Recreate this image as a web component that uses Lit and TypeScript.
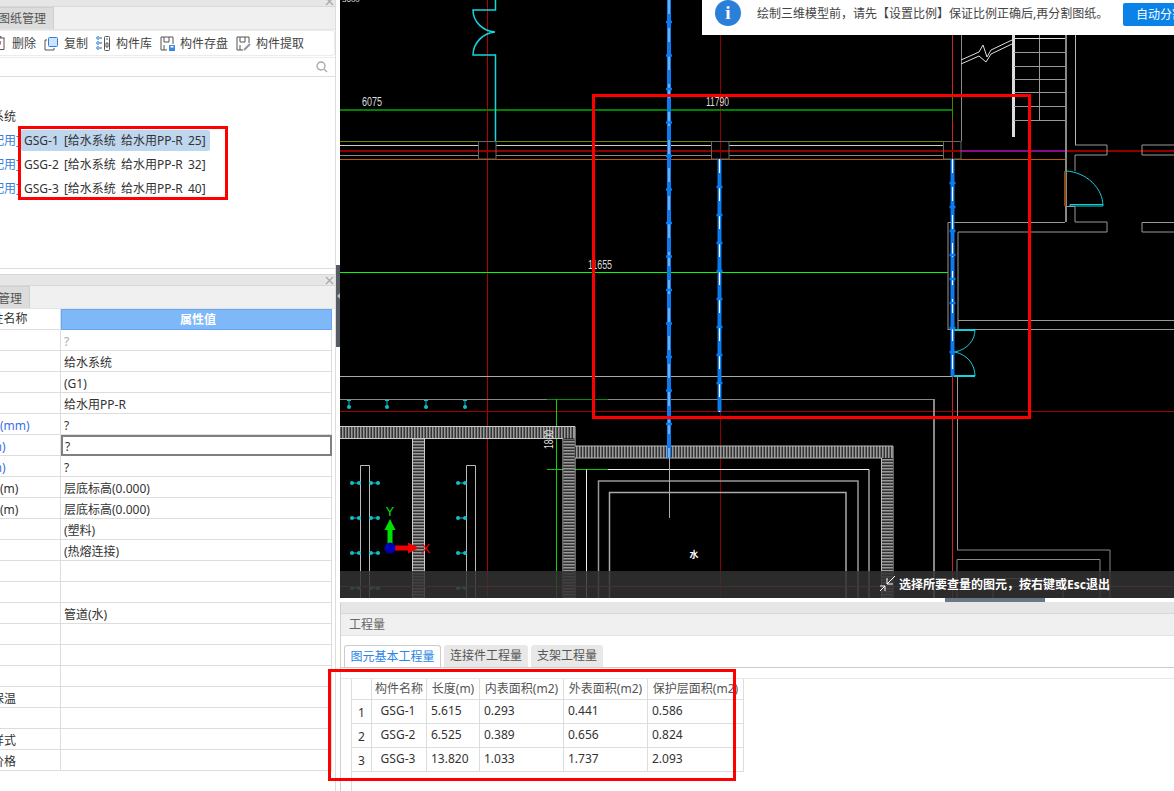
import { LitElement, html, css, svg } from "lit";
import { customElement } from "lit/decorators.js";

const props: { k: string; v: string; blue?: boolean; sub?: boolean; muted?: boolean; focus?: boolean }[] = [
  { k: "名称", v: "?", muted: true },
  { k: "系统类型", v: "给水系统" },
  { k: "系统编号", v: "(G1)" },
  { k: "材质名称", v: "给水用PP-R" },
  { k: "公称直径(mm)", v: "?", blue: true },
  { k: "外径(mm)", v: "?", blue: true, focus: true },
  { k: "内径(mm)", v: "?", blue: true },
  { k: "起点标高(m)", v: "层底标高(0.000)" },
  { k: "终点标高(m)", v: "层底标高(0.000)" },
  { k: "管件材质", v: "(塑料)" },
  { k: "连接方式", v: "(热熔连接)" },
  { k: "所在位置", v: "" },
  { k: "安装部位", v: "" },
  { k: "汇总信息", v: "管道(水)" },
  { k: "备注信息", v: "" },
  { k: "计算设置", v: "" },
  { k: "显示样式", v: "" },
  { k: "刷油保温", v: "", sub: true },
  { k: "保温材质", v: "" },
  { k: "保护样式", v: "", sub: true },
  { k: "管件价格", v: "", sub: true },
];

const tree = [
  "GSG-1 [给水系统 给水用PP-R 25]",
  "GSG-2 [给水系统 给水用PP-R 32]",
  "GSG-3 [给水系统 给水用PP-R 40]",
];

const qty = [
  ["1", "GSG-1", "5.615", "0.293", "0.441", "0.586"],
  ["2", "GSG-2", "6.525", "0.389", "0.656", "0.824"],
  ["3", "GSG-3", "13.820", "1.033", "1.737", "2.093"],
];

const range = (from: number, to: number, step: number) => {
  const out: number[] = [];
  for (let v = from; v <= to; v += step) out.push(v);
  return out;
};

const L = (x1: number, y1: number, x2: number, y2: number, c: string, w = 1) =>
  svg`<line x1=${x1} y1=${y1} x2=${x2} y2=${y2} stroke=${c} stroke-width=${w} shape-rendering="crispEdges"></line>`;
const P = (d: string, c: string, w = 1) => svg`<path d=${d} stroke=${c} stroke-width=${w} fill="none"></path>`;

const pipe = (x: number, y1: number, y2: number, ticks: number[], light = false) => svg`
  <line x1=${x} y1=${y1} x2=${x} y2=${y2} stroke="#0a7bf0" stroke-width="4"></line>
  <line x1=${x} y1=${y1} x2=${x} y2=${y2} stroke=${light ? "#a8d4ff" : "#ffffff"} stroke-width="1.2" stroke-dasharray="14 14"></line>
  ${ticks.map((t) => svg`<line x1=${x - 3} y1=${t} x2=${x + 3} y2=${t} stroke="#0a7bf0" stroke-width="2.5"></line>`)}
`;

const dotH = (x1: number, x2: number, y: number) => svg`
  <line x1=${x1} y1=${y} x2=${x2} y2=${y} stroke="#10c0c8"></line>
  <circle cx=${x1 + 1} cy=${y} r="2" fill="#10c0c8"></circle>
  <circle cx=${x2 - 1} cy=${y} r="2" fill="#10c0c8"></circle>`;

const drawing = () => svg`
  <defs>
    <pattern id="hatchV" width="3" height="4" patternUnits="userSpaceOnUse">
      <rect width="3" height="4" fill="#333"></rect><rect width="1.500" height="4" fill="#999"></rect>
    </pattern>
    <pattern id="hatchH" width="4" height="3" patternUnits="userSpaceOnUse">
      <rect width="4" height="3" fill="#333"></rect><rect width="4" height="1.500" fill="#999"></rect>
    </pattern>
  </defs>
  <rect x="340" y="0" width="834" height="598" fill="#000"></rect>

  <text class="dim tiny" x="342" y="2">3600</text>
  ${L(487.5, 0, 487.5, 598, "#b00000")}
  ${L(720.5, 35, 720.5, 598, "#8c0000", 1.5)}
  ${L(952.5, 35, 952.5, 598, "#d02020")}
  ${L(340, 150.5, 1174, 150.5, "#900000", 2)}
  ${L(340, 411.5, 1174, 411.5, "#a00000")}
  ${L(961, 150.5, 1065, 150.5, "#8a0a8a", 2)}

  ${L(340, 110, 952, 110, "#008000", 2)}
  ${L(340, 272.5, 948, 272.5, "#00ff00")}
  ${L(495, 92, 495, 120, "#20c020")}
  ${L(952, 92, 952, 120, "#508000")}

  ${L(340, 141, 952, 141, "#6a8a00")}
  ${L(340, 145.5, 478, 145.5, "#cccccc")}
  ${L(496, 145.5, 711, 145.5, "#cccccc")}
  ${L(729, 145.5, 944, 145.5, "#cccccc")}
  ${L(340, 155, 478, 155, "#888888")}
  ${L(496, 155, 711, 155, "#888888")}
  ${L(729, 155, 944, 155, "#888888")}
  ${L(340, 159, 1065, 159, "#c05a00")}
  <rect x="478.5" y="141.5" width="17.5" height="17.5" fill="none" stroke="#666"></rect>
  <rect x="711.5" y="141.5" width="17.5" height="17.5" fill="none" stroke="#666"></rect>
  <rect x="943.5" y="141.5" width="17.5" height="17.5" fill="none" stroke="#666"></rect>

  ${P("M495.5 0V10H473C473 22 483 31 495 32C483 33 473 43 473 55H495.5V141", "#10d8e0", 1.5)}

  ${L(961, 35, 961, 141, "#888")}
  ${L(1013, 35, 1013, 137, "#dddddd", 3)}
  ${L(1039, 35, 1039, 120, "#999", 1)}
  ${[38, 52, 66, 79, 92, 106, 120].map((y) => L(1014, y, 1065, y, y === 38 ? "#ddd" : "#999", 1))}
  ${L(1065.5, 35, 1065.5, 222, "#888", 2)}
  ${L(1075, 35, 1075, 145, "#bbb")}
  ${P("M1075 145H1107V155H1075V171", "#999")}
  ${P("M1174 145H1142V155H1174", "#999")}
  ${P("M961 60L979 52L983 45L987 57L991 50L1012 40M961 64L979 56L986 62L991 54L1012 44", "#ddd")}
  ${L(1065, 171, 1065, 206, "#8a4a10", 1.5)}
  ${P("M1066 171C1086 172 1103 188 1103 206H1070V204.5H1103", "#10d0d8")}
  ${P("M1066 206.5H1075V222H1107V232H958V330M948 330V222.5H1065", "#999")}
  ${P("M1174 222.5H1142V232H1174", "#999")}
  ${L(948, 329.7, 1174, 329.7, "#999")}
  ${L(958, 320.3, 1174, 320.3, "#999")}

  ${P("M952 329.5H975C975 340 968 349 955 352C968 355 975 365 975 376H952", "#10d0d8")}
  ${L(954, 329.5, 975, 329.5, "#10d0d8", 2)}
  ${L(954, 376.2, 975, 376.2, "#10d8e0", 2)}
  ${L(957, 376, 957, 550, "#999")}
  ${P("M957 550H1110V598M957 559.5H1100V598M957 559.5V598M993 598V578.5H1063V598", "#888")}
  ${L(340, 376.5, 952, 376.5, "#aaa")}
  ${L(340, 399.5, 934, 399.5, "#888")}
  ${L(934, 399, 934, 598, "#888", 1.5)}
  ${L(547, 399.5, 608, 399.5, "#0a8a0a")}
  ${L(547, 469.5, 608, 469.5, "#10c010")}
  ${L(556.5, 399, 556.5, 598, "#10d010")}

  <rect x="340" y="426.5" width="235" height="12" fill="url(#hatchV)"></rect>
  ${P("M340 426.5H575V598M340 438.5H563V598", "#ccc")}
  <rect x="563.5" y="439" width="11" height="159" fill="url(#hatchH)"></rect>
  <rect x="412.5" y="439" width="12" height="159" fill="url(#hatchH)"></rect>
  ${P("M412.5 439V598M424.5 439V598", "#ccc")}
  <rect x="575" y="446" width="318" height="12" fill="url(#hatchV)"></rect>
  ${P("M575 446H893V598M575 458H881.5V598", "#bbb")}
  <rect x="882" y="458.5" width="11" height="140" fill="url(#hatchH)"></rect>

  ${P("M608 469.5H869V598M586.5 469.5V598", "#eee")}
  ${P("M598.5 598V481H858V598", "#999", 1.5)}
  ${P("M609.5 598V492.5H846V598", "#aaa", 1.5)}
  ${P("M360.5 598V465.5H369.5V598", "#bbb")}
  ${P("M466.5 598V465.5H475.5V598", "#bbb")}
  ${[483, 518, 553, 588].map((y) => svg`${dotH(351, 360, y)}${dotH(370, 379, y)}${dotH(457, 466, y)}`)}
  ${[349, 387, 426, 465].map(
    (x) => svg`<line x1=${x} y1=${400} x2=${x} y2=${407} stroke="#10c0c8"></line>
      <line x1=${x - 2} y1="400.5" x2=${x + 2} y2="400.5" stroke="#10c0c8"></line>
      <circle cx=${x} cy="407" r="2" fill="#10c0c8"></circle>`
  )}

  ${pipe(669, 0, 458, range(22, 430, 33.5), true)}
  ${L(669, 458, 669, 518, "#aaa")}
  ${pipe(719.5, 159, 412, range(187, 390, 28))}
  ${pipe(952.5, 159, 376, [183, 207, 231, 255, 279, 303, 328, 352])}

  <text class="dim" x="362" y="106" textLength="20" lengthAdjust="spacingAndGlyphs">6075</text>
  <text class="dim" x="706" y="106" textLength="23" lengthAdjust="spacingAndGlyphs">11790</text>
  <text class="dim" x="588" y="269" textLength="24" lengthAdjust="spacingAndGlyphs">11655</text>
  <text class="dim" transform="translate(553 449) rotate(-90)" textLength="19" lengthAdjust="spacingAndGlyphs">1800</text>
  <text class="spot" x="694" y="558">水</text>

  <line x1="390" y1="547" x2="390" y2="528" stroke="#00e000" stroke-width="5"></line>
  <polygon points="390,519 395.5,530 384.5,530" fill="#00e000"></polygon>
  <text class="axisY" x="385.5" y="516">Y</text>
  <line x1="395" y1="548" x2="410" y2="548" stroke="#f00000" stroke-width="5"></line>
  <polygon points="419,548 408,542.5 408,553.5" fill="#f00000"></polygon>
  <text class="axisX" x="421.5" y="553">X</text>
  <circle cx="390" cy="548" r="5.5" fill="#0000b4"></circle>

  ${L(340, 586, 1174, 586, "#d02020")}
  <rect x="340" y="571" width="834" height="27" fill="#333" fill-opacity="0.85"></rect>
  ${P("M895 576L887 584M887 578V584H893", "#fff")}
  ${P("M880 591L885 586M880 586H885V591", "#fff")}
`;

@customElement("app-root")
export class AppRoot extends LitElement {
  static styles = css`
    :host {
      display: block;
      width: 1174px;
      height: 791px;
      overflow: hidden;
      background: #fff;
      position: relative;
      font-family: "Noto Sans", "Noto Sans CJK SC", sans-serif;
      font-size: 12px;
      color: #333;
    }
    .app {
      display: grid;
      grid-template-columns: 336px 4px 834px;
      height: 791px;
    }
    .left {
      overflow: hidden;
      border-right: 1px solid #ddd;
      box-sizing: border-box;
      width: 336px;
      background: #fff;
    }
    .shift {
      width: 396px;
      margin-left: -60px;
    }
    .head {
      background: #e6e6e6;
      border-bottom: 1px solid #d8d8d8;
      position: relative;
      box-sizing: border-box;
      color: #999;
    }
    .head.h1 {
      height: 7px;
      overflow: hidden;
    }
    .head.h2 {
      height: 12px;
      margin-top: 5px;
      border-top: 1px solid #d8d8d8;
    }
    .close {
      position: absolute;
      right: 2px;
      width: 9px;
      height: 9px;
    }
    .h1 .close {
      top: -3px;
    }
    .h2 .close {
      top: 1px;
    }
    .tabs {
      height: 23px;
      background: #f0f0f0;
      display: flex;
      box-sizing: border-box;
      border-bottom: 1px solid #e4e4e4;
    }
    .tab {
      background: #dcdcdc;
      border: 1px solid #d0d0d0;
      border-bottom: 0;
      color: #555;
      line-height: 21px;
      text-align: center;
      box-sizing: border-box;
      overflow: hidden;
      white-space: nowrap;
    }
    .tab.t0 {
      width: 50px;
    }
    .tab.t1 {
      width: 64px;
    }
    .tab.t2 {
      width: 62px;
      margin-left: 28px;
      padding-right: 2px;
      line-height: 23px;
    }
    .toolbar {
      height: 26px;
      display: flex;
      align-items: center;
      background: #fff;
      border: 1px solid #ececec;
      border-left: 0;
      border-radius: 0 4px 4px 0;
      box-sizing: border-box;
      margin-right: 1px;
      white-space: nowrap;
    }
    .toolgroup {
      display: flex;
      align-items: center;
      height: 26px;
      padding-left: 54px;
    }
    .ti {
      display: flex;
      align-items: center;
      color: #444;
    }
    .ti svg {
      flex: none;
    }
    .ti.del {
      width: 50px;
    }
    .ti.del svg {
      margin-right: 6px;
    }
    .ti.copy {
      width: 52px;
    }
    .ti.copy svg {
      margin-right: 5px;
    }
    .ti.lib {
      width: 64px;
    }
    .ti.lib svg {
      margin-right: 6px;
    }
    .ti.save {
      width: 76px;
    }
    .ti.save svg {
      margin-right: 5px;
    }
    .ti.pick svg {
      margin-right: 5px;
    }
    .search {
      height: 20px;
      margin-top: 1px;
      box-sizing: border-box;
      border-top: 1px solid #ececec;
      border-bottom: 1px solid #dedede;
      display: flex;
      justify-content: flex-end;
      align-items: center;
      padding-right: 8px;
    }
    .tree {
      height: 192px;
      box-sizing: border-box;
      padding-top: 27px;
      border-bottom: 1px solid #dedede;
    }
    .tree-root {
      height: 24px;
      line-height: 26px;
      padding-left: 28px;
    }
    .tree-row {
      height: 24px;
      display: flex;
      align-items: center;
      white-space: nowrap;
    }
    .state {
      width: 78px;
      padding-left: 36px;
      box-sizing: border-box;
      color: #3a7fe0;
      flex: none;
      margin-right: 3px;
    }
    .node {
      padding: 0 5px 0 3px;
      height: 21px;
      line-height: 21px;
      border-radius: 2px;
      width: 181px;
      word-spacing: 2px;
    }
    .node.sel {
      background: #bfd6ef;
    }
    .ptable {
      display: grid;
      grid-template-columns: 114px 271px;
      grid-auto-rows: 21px;
      margin-left: 7px;
      width: 385px;
    }
    .pk,
    .pv {
      border-bottom: 1px solid #ddd;
      box-sizing: border-box;
      line-height: 23px;
      white-space: nowrap;
    }
    .pk {
      padding-left: 5px;
      border-right: 1px solid #ddd;
    }
    .pv {
      padding-left: 3px;
      border-right: 1px solid #ddd;
    }
    .pk.blue {
      color: #3a6fe8;
    }
    .pk.sub {
      padding-left: 21px;
    }
    .pv.muted {
      color: #aaa;
    }
    .pv.focus {
      border: 2px solid #7f7f7f;
      line-height: 20px;
      padding-left: 2px;
    }
    .pk.hk {
      text-align: center;
      padding-left: 0;
      line-height: 20px;
    }
    .pv.hv {
      background: #7fb8f8;
      color: #fff;
      font-weight: 700;
      text-align: center;
      border: 1px solid #64a6f0;
      line-height: 19px;
    }
    .split {
      background: #fff;
    }
    .grip {
      margin-top: 265px;
      height: 82px;
      background: #555c64;
      position: relative;
    }
    .grip::after {
      content: "";
      position: absolute;
      left: 1px;
      top: 28px;
      border: 3px solid transparent;
      border-right-color: #b8b8b8;
      border-left: 0;
    }
    .right {
      width: 834px;
      display: flex;
      flex-direction: column;
      position: relative;
      overflow: hidden;
    }
    .canvas {
      width: 834px;
      height: 598px;
      display: block;
      flex: none;
    }
    .dim {
      font: 12px "Liberation Sans", sans-serif;
      fill: #ddd;
    }
    .tiny {
      font-size: 8px;
    }
    .spot {
      font: 700 9px "Noto Sans CJK SC", sans-serif;
      fill: #fff;
      text-anchor: middle;
    }
    .axisY {
      font: 13px "Liberation Sans", sans-serif;
      fill: #00e000;
    }
    .axisX {
      font: 13px "Liberation Sans", sans-serif;
      fill: #f00000;
    }
    .notice {
      position: absolute;
      left: 362px;
      top: 0;
      width: 472px;
      height: 35px;
      background: #fff;
      display: flex;
      white-space: nowrap;
      overflow: hidden;
      align-items: flex-start;
    }
    .ico {
      width: 26px;
      height: 26px;
      border-radius: 50%;
      background: #2a7fd8;
      color: #fff;
      margin: 0 0 0 13px;
      flex: none;
      display: flex;
      align-items: center;
      justify-content: center;
      font: 700 19px "Liberation Serif", serif;
    }
    .notice-text {
      margin-left: 16px;
      line-height: 28px;
      color: #444;
      width: 344px;
      flex: none;
    }
    .auto {
      margin: 2.5px 0 0 22px;
      width: 90px;
      height: 23px;
      flex: none;
      border-radius: 2px;
      background: #0a82e8;
      color: #fff;
      line-height: 23px;
      padding-left: 13px;
      box-sizing: border-box;
    }
    .hint {
      position: absolute;
      left: 559px;
      top: 575px;
      color: #fff;
      font-weight: 700;
      line-height: 20px;
      white-space: nowrap;
    }
    .sep {
      height: 4px;
      background: #fff;
      position: relative;
      flex: none;
    }
    .handle {
      position: absolute;
      left: 605px;
      width: 100px;
      height: 4px;
      background: #6b7785;
    }
    .qpanel {
      flex: 1;
      border-left: 1px solid #d0d0d0;
      min-height: 0;
    }
    .qhead {
      height: 12px;
      background: #e6e6e6;
      border-bottom: 1px solid #d8d8d8;
      box-sizing: border-box;
    }
    .qtitle {
      height: 22px;
      background: #f0f0f0;
      border-bottom: 1px solid #e4e4e4;
      box-sizing: border-box;
      line-height: 22px;
      padding-left: 8px;
      color: #666;
    }
    .qtabs {
      display: flex;
      gap: 3px;
      padding: 9px 0 0 3px;
      height: 32px;
      box-sizing: border-box;
      border-bottom: 1px solid #ccc;
    }
    .qtab {
      height: 22px;
      line-height: 22px;
      background: #e8e8e8;
      border-radius: 3px 3px 0 0;
      text-align: center;
      color: #555;
    }
    .qtab.on {
      width: 97px;
      background: #fff;
      border: 1px solid #ccc;
      border-bottom: 0;
      box-sizing: border-box;
      color: #2a85e8;
      line-height: 21px;
    }
    .qtab.b {
      width: 84px;
    }
    .qtab.c {
      width: 72px;
    }
    .qbody {
      border-top: 1px solid #e8e8e8;
      margin-top: 10px;
      padding-left: 10px;
      height: 114px;
    }
    .qtable {
      display: grid;
      grid-template-columns: 20px 55px 53px 84px 84px 96px;
      grid-template-rows: 21px 24px 24px 24px;
      width: 393px;
      border-left: 1px solid #ddd;
      box-sizing: border-box;
      height: 93px;
    }
    .qc {
      border-right: 1px solid #ddd;
      border-bottom: 1px solid #ddd;
      box-sizing: border-box;
      padding-left: 4px;
      white-space: nowrap;
      line-height: 21px;
      overflow: hidden;
    }
    .qc.th {
      line-height: 20px;
      text-align: center;
      padding: 0;
      color: #555;
    }
    .qc.idx {
      text-align: center;
      padding: 2px 0 0;
    }
    .qc.nm {
      text-align: center;
      padding: 0 2px 0 0;
    }
    .qtail {
      width: 393px;
      height: 30px;
      border-left: 1px solid #ddd;
      box-sizing: border-box;
    }
    .mark {
      position: absolute;
      border: 3px solid #ff0000;
      box-sizing: border-box;
      pointer-events: none;
    }
    .m1 {
      left: 18px;
      top: 126px;
      width: 210px;
      height: 74px;
    }
    .m2 {
      left: 592px;
      top: 93.5px;
      width: 439px;
      height: 325px;
    }
    .m3 {
      left: 328px;
      top: 669px;
      width: 408px;
      height: 112px;
    }
  `;

  private closeIcon() {
    return html`<svg class="close" viewBox="0 0 9 9"><path d="M1 1L8 8M8 1L1 8" stroke="#a8a8a8" stroke-width="1.2"></path></svg>`;
  }

  private toolbar() {
    return html`<div class="toolbar">
      <div class="toolgroup">
        <span class="ti del">
          <svg width="12" height="16" viewBox="0 0 12 16"><path d="M1.5 3H10.500M4 3V1.500H7V3M2 3V14.500H10V3M6 6V9" fill="none" stroke="#555"></path><path d="M5.500 6H6.500V10H5.500Z" fill="#e04040"></path></svg>删除
        </span>
        <span class="ti copy">
          <svg width="15" height="15" viewBox="0 0 15 15"><path d="M3 4H1V14H10V12" fill="none" stroke="#555"></path><rect x="4.500" y="1.500" width="9" height="9" rx="1" fill="#cfe4fb" stroke="#2a80e0"></rect></svg>复制
        </span>
        <span class="ti lib">
          <svg width="14" height="15" viewBox="0 0 14 15"><path d="M4 2H6M4 7H6M4 12H6" stroke="#555"></path><circle cx="2" cy="2" r="1.300" fill="none" stroke="#2a80e0"></circle><circle cx="2" cy="7" r="1.300" fill="none" stroke="#2a80e0"></circle><circle cx="2" cy="12" r="1.300" fill="none" stroke="#2a80e0"></circle><rect x="8.500" y="0.500" width="5" height="14" rx="1" fill="none" stroke="#555"></rect><path d="M10 3H12M10 7H12V11H10Z" fill="none" stroke="#555"></path></svg>构件库
        </span>
        <span class="ti save">
          <svg width="15" height="15" viewBox="0 0 15 15"><path d="M7 14H1V1H13V8M4 1V6H9V1M4 14V9" fill="none" stroke="#555"></path><rect x="9" y="9" width="6" height="6" fill="#3a8ae0"></rect><rect x="10.500" y="10" width="3" height="1.500" fill="#fff"></rect></svg>构件存盘
        </span>
        <span class="ti pick">
          <svg width="15" height="15" viewBox="0 0 15 15"><path d="M7 14H1V1H13V7M4 1V6H9V1M4 14V9" fill="none" stroke="#555"></path><path d="M8 14L14 8" stroke="#8a97a8" stroke-width="2"></path></svg>构件提取
        </span>
      </div>
    </div>`;
  }

  render() {
    return html`
      <div class="app">
        <div class="left">
          <div class="shift">
            <div class="head h1">${this.closeIcon()}</div>
            <div class="tabs"><div class="tab t0">构件列表</div><div class="tab t1">图纸管理</div></div>
            ${this.toolbar()}
            <div class="search">
              <svg width="12" height="12" viewBox="0 0 12 12"><circle cx="5" cy="5" r="4" fill="none" stroke="#a8a8a8" stroke-width="1.300"></circle><path d="M8 8L11 11" stroke="#a8a8a8" stroke-width="1.300"></path></svg>
            </div>
            <div class="tree">
              <div class="tree-root">给水系统</div>
              ${tree.map(
                (t, i) => html`<div class="tree-row">
                  <span class="state">[未配用]</span><span class="node ${i === 0 ? "sel" : ""}">${t}</span>
                </div>`
              )}
            </div>
            <div class="head h2">${this.closeIcon()}</div>
            <div class="tabs"><div class="tab t2">属性管理</div></div>
            <div class="ptable">
              <div class="pk hk">属性名称</div>
              <div class="pv hv">属性值</div>
              ${props.map(
                (p) => html`<div class="pk ${p.blue ? "blue" : ""} ${p.sub ? "sub" : ""}">${p.k}</div>
                  <div class="pv ${p.muted ? "muted" : ""} ${p.focus ? "focus" : ""}">${p.v}</div>`
              )}
            </div>
          </div>
        </div>
        <div class="split"><div class="grip"></div></div>
        <div class="right">
          <svg class="canvas" viewBox="340 0 834 598">${drawing()}</svg>
          <div class="notice">
            <div class="ico">i</div>
            <div class="notice-text">绘制三维模型前，请先【设置比例】保证比例正确后,再分割图纸。</div>
            <div class="auto">自动分割</div>
          </div>
          <div class="hint">选择所要查量的图元，按右键或Esc退出</div>
          <div class="sep"><div class="handle"></div></div>
          <div class="qpanel">
            <div class="qhead"></div>
            <div class="qtitle">工程量</div>
            <div class="qtabs">
              <div class="qtab on">图元基本工程量</div>
              <div class="qtab b">连接件工程量</div>
              <div class="qtab c">支架工程量</div>
            </div>
            <div class="qbody">
              <div class="qtable">
                <div class="qc th"></div>
                <div class="qc th">构件名称</div>
                <div class="qc th">长度(m)</div>
                <div class="qc th">内表面积(m2)</div>
                <div class="qc th">外表面积(m2)</div>
                <div class="qc th">保护层面积(m2)</div>
                ${qty.map(
                  (r) => html`<div class="qc idx">${r[0]}</div>
                    <div class="qc nm">${r[1]}</div>
                    <div class="qc">${r[2]}</div>
                    <div class="qc">${r[3]}</div>
                    <div class="qc">${r[4]}</div>
                    <div class="qc">${r[5]}</div>`
                )}
              </div>
              <div class="qtail"></div>
            </div>
          </div>
        </div>
      </div>
      <div class="mark m1"></div>
      <div class="mark m2"></div>
      <div class="mark m3"></div>
    `;
  }
}
